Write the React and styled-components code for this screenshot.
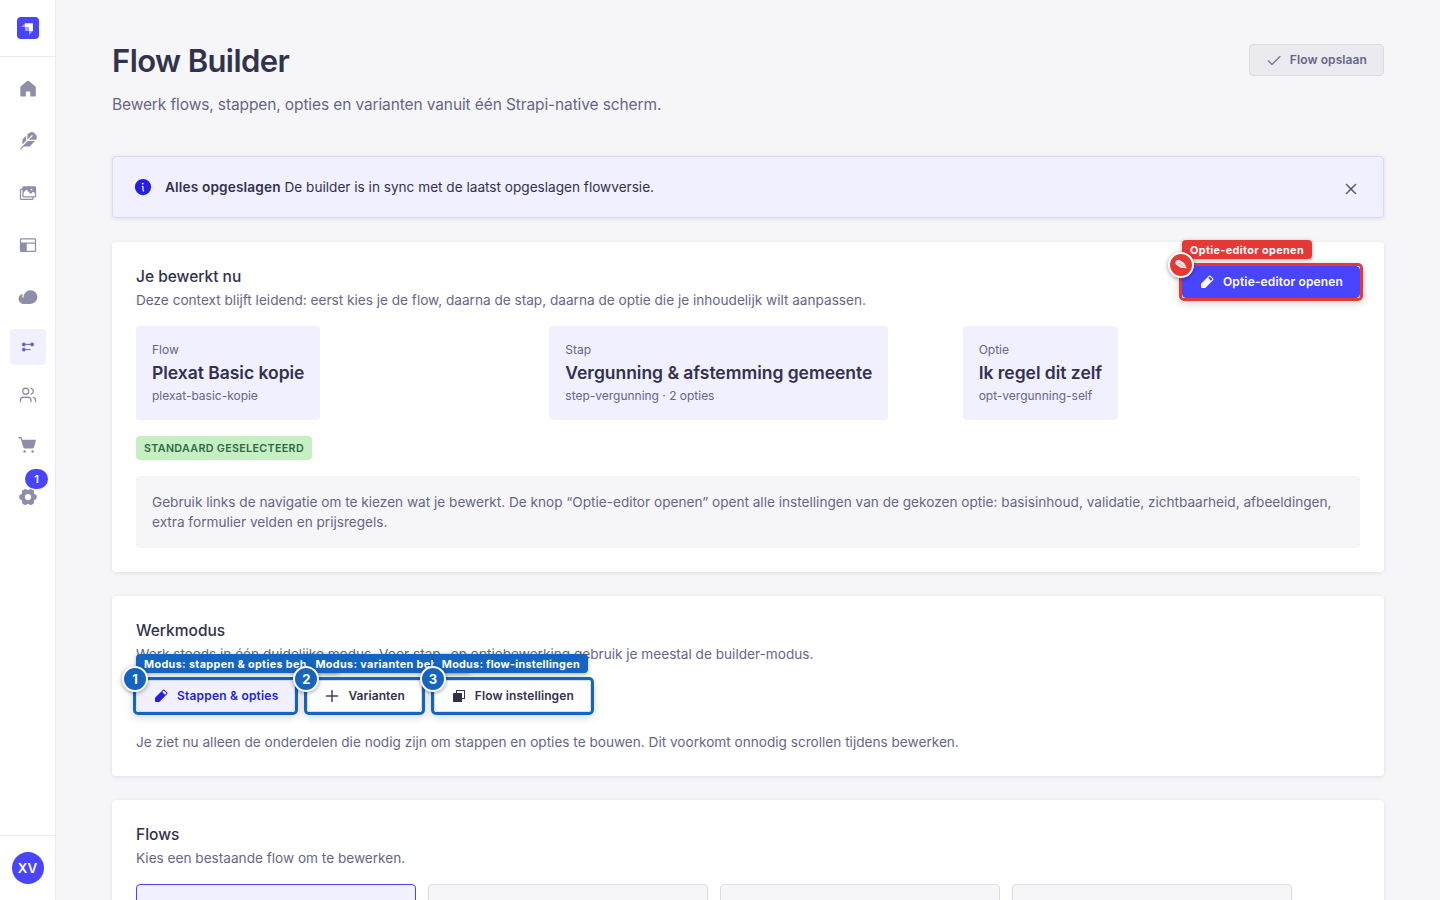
import React from 'react';
import styled, { createGlobalStyle } from 'styled-components';
import {
  PiFeatherFill,
  PiImagesFill,
  PiLayoutFill,
  PiCloudFill,
  PiGearSixFill,
  PiPencilSimpleFill,
  PiPlus,
  PiCheck,
  PiX,
  PiInfoFill,
  PiCopyFill,
} from 'react-icons/pi';
import { Users } from 'lucide-react';

const GlobalStyle = createGlobalStyle`
  * {
    box-sizing: border-box;
  }
  body {
    margin: 0;
    overflow: hidden;
    background: #f6f6f9;
    color: #32324d;
    font-family: Inter, 'Liberation Sans', sans-serif;
    -webkit-font-smoothing: antialiased;
  }
  h1, h2, p {
    margin: 0;
  }
  svg {
    display: block;
    flex-shrink: 0;
  }
`;

const Page = styled.div`
  display: flex;
  height: 900px;
  overflow: hidden;
`;

// sidebar
const Sidebar = styled.nav`
  display: flex;
  flex-direction: column;
  flex-shrink: 0;
  width: 56px;
  background: #ffffff;
  border-right: 1px solid #eaeaef;
`;
const Brand = styled.div`
  display: flex;
  justify-content: center;
  align-items: center;
  height: 57px;
  border-bottom: 1px solid #eaeaef;
`;
const NavList = styled.div`
  display: flex;
  flex-direction: column;
  flex: 1;
  padding-top: 6px;
`;
const NavItem = styled.a`
  display: flex;
  justify-content: center;
  align-items: center;
  position: relative;
  height: ${(props) => (props.$compact ? '48px' : '52px')};
  color: #8e8ea9;
`;
const ActiveBox = styled.span`
  display: flex;
  justify-content: center;
  align-items: center;
  width: 36px;
  height: 36px;
  border-radius: 4px;
  background: #f0f0ff;
`;
const NavBadge = styled.span`
  position: absolute;
  top: -2px;
  left: 25px;
  width: 23px;
  height: 20px;
  border-radius: 10px;
  background: #4945ff;
  color: #ffffff;
  font-size: 11px;
  font-weight: 600;
  line-height: 20px;
  text-align: center;
`;
const Profile = styled.div`
  display: flex;
  justify-content: center;
  align-items: center;
  height: 65px;
  border-top: 1px solid #eaeaef;
`;
const Avatar = styled.span`
  width: 32px;
  height: 32px;
  border-radius: 50%;
  background: #4945ff;
  color: #ffffff;
  font-size: 13.4px;
  font-weight: 600;
  line-height: 32px;
  text-align: center;
`;

// page parts
const Main = styled.main`
  display: flex;
  flex-direction: column;
  flex: 1;
  gap: 24px;
  min-width: 0;
  padding: 0 56px;
`;
const Header = styled.header`
  display: flex;
  justify-content: space-between;
  align-items: flex-start;
  flex-shrink: 0;
  height: 132px;
  padding-top: 41px;
`;
const Title = styled.h1`
  font-size: 31px;
  font-weight: 600;
  line-height: 40px;
  letter-spacing: -0.019em;
`;
const Subtitle = styled.p`
  margin-top: 12px;
  color: #666687;
  font-size: 15.5px;
  line-height: 24px;
  letter-spacing: -0.0075em;
`;
const tones = {
  primary: { color: '#ffffff', background: '#4945ff', border: '#4945ff' },
  selected: { color: '#271fe0', background: '#f0f0ff', border: '#d9d8ff' },
  outline: { color: '#32324d', background: '#ffffff', border: '#dcdce4' },
  disabled: { color: '#666687', background: '#eaeaef', border: '#dcdce4' },
};
const Button = styled.button`
  display: inline-flex;
  align-items: center;
  gap: 8px;
  height: 32px;
  padding: 0 16px;
  border: 1px solid ${(props) => tones[props.$tone].border};
  border-radius: 4px;
  background: ${(props) => tones[props.$tone].background};
  color: ${(props) => tones[props.$tone].color};
  font-family: inherit;
  font-size: 12px;
  font-weight: 600;
  line-height: 16px;
  letter-spacing: ${(props) => props.$tracking || 0.0115}em;
  white-space: nowrap;
`;
const HeaderAction = styled.div`
  padding-top: 3px;
`;

const Alert = styled.div`
  display: flex;
  align-items: center;
  gap: 12px;
  flex-shrink: 0;
  height: 62px;
  padding: 0 24px 0 20px;
  border: 1px solid #d9d8ff;
  border-radius: 4px;
  background: #f0f0ff;
  box-shadow: 0 1px 4px rgba(33, 33, 52, 0.1);
  color: #271fe0;
`;
const AlertText = styled.p`
  flex: 1;
  color: #32324d;
  font-size: 13.61px;
  line-height: 20px;
`;
const Strong = styled.strong`
  font-weight: 600;
  letter-spacing: 0.012em;
`;
const CloseButton = styled.span`
  padding-top: 4px;
  color: #4a4a6a;
`;

const Card = styled.section`
  flex-shrink: 0;
  padding: 24px;
  border-radius: 4px;
  background: #ffffff;
  box-shadow: 0 1px 4px rgba(33, 33, 52, 0.1);
`;
const CardHead = styled.div`
  display: flex;
  justify-content: space-between;
  align-items: flex-start;
`;
const CardTitle = styled.h2`
  height: 20px;
  font-size: 15.5px;
  font-weight: 500;
  line-height: 22px;
`;
const Text = styled.p`
  margin-top: ${(props) => props.$top || 0}px;
  color: #666687;
  font-size: 13.62px;
  line-height: 20px;
`;

const ContextGrid = styled.div`
  display: grid;
  grid-template-columns: repeat(3, 1fr);
  gap: 16px;
  justify-items: start;
  margin-top: 16px;
`;
const ContextBox = styled.div`
  display: flex;
  flex-direction: column;
  gap: 4px;
  padding: 16px;
  border-radius: 4px;
  background: #f0f0ff;
  white-space: nowrap;
`;
const Small = styled.span`
  color: #666687;
  font-size: 12px;
  line-height: 16px;
  letter-spacing: -0.001em;
`;
const ContextName = styled.span`
  font-size: 17.5px;
  font-weight: 600;
  line-height: 22px;
  letter-spacing: -0.0015em;
`;
const Badge = styled.span`
  display: block;
  width: fit-content;
  height: 24px;
  margin-top: 16px;
  padding: 0 8px;
  border-radius: 4px;
  background: #c6f0c2;
  color: #2f6846;
  font-size: 10.7px;
  font-weight: 600;
  line-height: 26px;
  letter-spacing: 0.0325em;
  text-transform: uppercase;
`;
const Note = styled.div`
  margin-top: 16px;
  padding: 16px;
  border-radius: 4px;
  background: #f6f6f9;
`;
const ModeRow = styled.div`
  display: flex;
  gap: 12px;
  margin-top: 16px;
`;
const FlowGrid = styled.div`
  display: grid;
  grid-template-columns: repeat(4, 280px);
  gap: 12px;
  margin-top: 16px;
`;
const FlowCard = styled.div`
  height: 96px;
  border: 1px solid ${(props) => (props.$selected ? '#4945ff' : '#dcdce4')};
  border-radius: 4px;
  background: ${(props) => (props.$selected ? '#f0f0ff' : '#f6f6f9')};
`;

// annotation drawn over a button
const Marked = styled.div`
  display: flex;
  position: relative;
`;
const Ring = styled.span`
  position: absolute;
  inset: -3px;
  border: 3px solid ${(props) => props.$color};
  border-radius: 5px;
  box-shadow: 0 2px 8px rgba(0, 0, 0, 0.18);
`;
const MarkLabel = styled.span`
  position: absolute;
  top: -26px;
  left: 0;
  height: 19px;
  padding: 0 8px;
  border-radius: 4px;
  background: ${(props) => props.$color};
  box-shadow: 0 1px 4px rgba(0, 0, 0, 0.3);
  color: #ffffff;
  font-size: 10.8px;
  font-weight: 700;
  line-height: 21px;
  letter-spacing: ${(props) => props.$tracking || 0.035}em;
  white-space: nowrap;
`;
const MarkDot = styled.span`
  position: absolute;
  top: -14px;
  left: -14px;
  width: 26px;
  height: 26px;
  border: 2px solid #ffffff;
  border-radius: 50%;
  background: ${(props) => props.$color};
  box-shadow: 0 1px 4px rgba(0, 0, 0, 0.4);
  color: #ffffff;
  font-size: 13px;
  font-weight: 700;
  line-height: 22px;
  text-align: center;
`;
const PencilMark = styled.span`
  display: block;
  font-family: 'DejaVu Sans', sans-serif;
  font-size: 15px;
  -webkit-text-stroke: 0.4px #ffffff;
  transform: rotate(35deg);
`;

const Logo = () => (
  <svg width="22" height="22" viewBox="0 0 22 22">
    <rect width="22" height="22" rx="4" fill="#4945ff" />
    <path d="M7.9 6.2h7.6a.4.4 0 0 1 .4.4v7.5h-3.9v-3.6a.4.4 0 0 0-.4-.4H7.9z" fill="#fff" />
    <path d="M7.9 6.2v3.9H4.4a.2.2 0 0 1-.15-.34z" fill="#fff" opacity=".5" />
    <path d="M12 17.6v-3.5h3.9l-3.56 3.65a.2.2 0 0 1-.34-.15z" fill="#fff" opacity=".5" />
    <path d="M7.9 10.1h3.7a.4.4 0 0 1 .4.4v3.6H8.3a.4.4 0 0 1-.4-.4z" fill="#fff" opacity=".5" />
  </svg>
);

const House = () => (
  <svg width="20" height="20" viewBox="0 0 20 20" fill="currentColor">
    <path d="M17.8 8.5v8.3a.8.8 0 0 1-.8.8h-4.1a.7.7 0 0 1-.7-.7v-3.6a.7.7 0 0 0-.7-.7H8.6a.7.7 0 0 0-.7.7v3.6a.7.7 0 0 1-.7.7H3.1a.8.8 0 0 1-.8-.8V8.5c0-.5.2-.9.6-1.2l6.2-5.2a1.4 1.4 0 0 1 1.8 0l6.3 5.2c.4.3.6.7.6 1.2z" />
  </svg>
);

const Cart = () => (
  <svg width="20" height="20" viewBox="0 0 20 20" fill="currentColor">
    <path d="M.9 2.1h1.6c.6 0 1.1.4 1.3 1l.5 1.6h13c.5 0 .8.5.6 1l-2 6.5c-.3.9-1 1.4-1.9 1.4H7.2c-.9 0-1.6-.5-1.9-1.4L2.6 3.4H.9a.65.65 0 0 1 0-1.3z" />
    <circle cx="6.6" cy="16.5" r="1.25" />
    <circle cx="14.6" cy="16.5" r="1.25" />
  </svg>
);

const FlowIcon = () => (
  <svg width="16" height="16" viewBox="0 0 16 16" fill="#4945ff" stroke="#8e8ea9" strokeWidth="1">
    <path d="M4 5.4h8M4 10.6h6.6" stroke="#666687" />
    <rect x="2.3" y="3.9" width="3" height="3" rx="1" />
    <rect x="10.6" y="3.9" width="3" height="3" rx="1" />
    <rect x="2.3" y="9.1" width="3" height="3" rx="1" />
  </svg>
);

const BLUE = '#1565c0';
const RED = '#e53935';

const modes = [
  {
    name: 'Stappen & opties',
    label: 'Modus: stappen & opties beheren',
    icon: <PiPencilSimpleFill size={16} />,
    tone: 'selected',
    tracking: 0.0165,
    labelTracking: 0.033,
  },
  {
    name: 'Varianten',
    label: 'Modus: varianten beheren',
    icon: <PiPlus size={16} strokeWidth={6} />,
    tone: 'outline',
    tracking: 0.006,
    labelTracking: 0.033,
  },
  {
    name: 'Flow instellingen',
    label: 'Modus: flow-instellingen',
    icon: <PiCopyFill size={16} />,
    tone: 'outline',
    tracking: 0.0078,
    labelTracking: 0.024,
  },
];

const context = [
  { kind: 'Flow', name: 'Plexat Basic kopie', info: 'plexat-basic-kopie' },
  { kind: 'Stap', name: 'Vergunning & afstemming gemeente', info: 'step-vergunning · 2 opties' },
  { kind: 'Optie', name: 'Ik regel dit zelf', info: 'opt-vergunning-self' },
];

function MarkedButton({ color, label, mark, tone, icon, tracking, labelTracking, children }) {
  return (
    <Marked>
      <Button $tone={tone} $tracking={tracking}>
        {icon}
        {children}
      </Button>
      <Ring $color={color} />
      <MarkLabel $color={color} $tracking={labelTracking}>{label}</MarkLabel>
      <MarkDot $color={color}>{mark}</MarkDot>
    </Marked>
  );
}

function SideNav() {
  return (
    <Sidebar>
      <Brand>
        <Logo />
      </Brand>
      <NavList>
        <NavItem><House /></NavItem>
        <NavItem><PiFeatherFill size={20} /></NavItem>
        <NavItem><PiImagesFill size={20} /></NavItem>
        <NavItem><PiLayoutFill size={20} /></NavItem>
        <NavItem><PiCloudFill size={20} /></NavItem>
        <NavItem $compact>
          <ActiveBox>
            <FlowIcon />
          </ActiveBox>
        </NavItem>
        <NavItem $compact><Users size={18} strokeWidth={1.7} /></NavItem>
        <NavItem><Cart /></NavItem>
        <NavItem>
          <PiGearSixFill size={20} />
          <NavBadge>1</NavBadge>
        </NavItem>
      </NavList>
      <Profile>
        <Avatar>XV</Avatar>
      </Profile>
    </Sidebar>
  );
}

function App() {
  return (
    <Page>
      <GlobalStyle />
      <SideNav />
      <Main>
        <Header>
          <div>
            <Title>Flow Builder</Title>
            <Subtitle>Bewerk flows, stappen, opties en varianten vanuit één Strapi-native scherm.</Subtitle>
          </div>
          <HeaderAction>
            <Button $tone="disabled" $tracking={0.0075}>
              <PiCheck size={16} strokeWidth={6} />
              Flow opslaan
            </Button>
          </HeaderAction>
        </Header>

        <Alert>
          <PiInfoFill size={20} />
          <AlertText>
            <Strong>Alles opgeslagen</Strong> De builder is in sync met de laatst opgeslagen flowversie.
          </AlertText>
          <CloseButton>
            <PiX size={16} strokeWidth={8} />
          </CloseButton>
        </Alert>

        <Card>
          <CardHead>
            <div>
              <CardTitle>Je bewerkt nu</CardTitle>
              <Text $top={4}>
                Deze context blijft leidend: eerst kies je de flow, daarna de stap, daarna de optie die je inhoudelijk wilt
                aanpassen.
              </Text>
            </div>
            <MarkedButton
              color={RED}
              label="Optie-editor openen"
              mark={<PencilMark>✏</PencilMark>}
              tone="primary"
              icon={<PiPencilSimpleFill size={16} />}
              labelTracking={0.035}
            >
              Optie-editor openen
            </MarkedButton>
          </CardHead>
          <ContextGrid>
            {context.map((item) => (
              <ContextBox key={item.kind}>
                <Small>{item.kind}</Small>
                <ContextName>{item.name}</ContextName>
                <Small>{item.info}</Small>
              </ContextBox>
            ))}
          </ContextGrid>
          <Badge>Standaard geselecteerd</Badge>
          <Note>
            <Text>
              Gebruik links de navigatie om te kiezen wat je bewerkt. De knop “Optie-editor openen” opent alle instellingen van de
              gekozen optie: basisinhoud, validatie, zichtbaarheid, afbeeldingen, extra formulier velden en prijsregels.
            </Text>
          </Note>
        </Card>

        <Card>
          <CardTitle>Werkmodus</CardTitle>
          <Text $top={4}>
            Werk steeds in één duidelijke modus. Voor stap- en optiebewerking gebruik je meestal de builder-modus.
          </Text>
          <ModeRow>
            {modes.map((mode, i) => (
              <MarkedButton
                key={mode.name}
                color={BLUE}
                label={mode.label}
                mark={i + 1}
                tone={mode.tone}
                icon={mode.icon}
                tracking={mode.tracking}
                labelTracking={mode.labelTracking}
              >
                {mode.name}
              </MarkedButton>
            ))}
          </ModeRow>
          <Text $top={20}>
            Je ziet nu alleen de onderdelen die nodig zijn om stappen en opties te bouwen. Dit voorkomt onnodig scrollen tijdens
            bewerken.
          </Text>
        </Card>

        <Card>
          <CardTitle>Flows</CardTitle>
          <Text $top={4}>Kies een bestaande flow om te bewerken.</Text>
          <FlowGrid>
            <FlowCard $selected />
            <FlowCard />
            <FlowCard />
            <FlowCard />
          </FlowGrid>
        </Card>
      </Main>
    </Page>
  );
}

export default App;
